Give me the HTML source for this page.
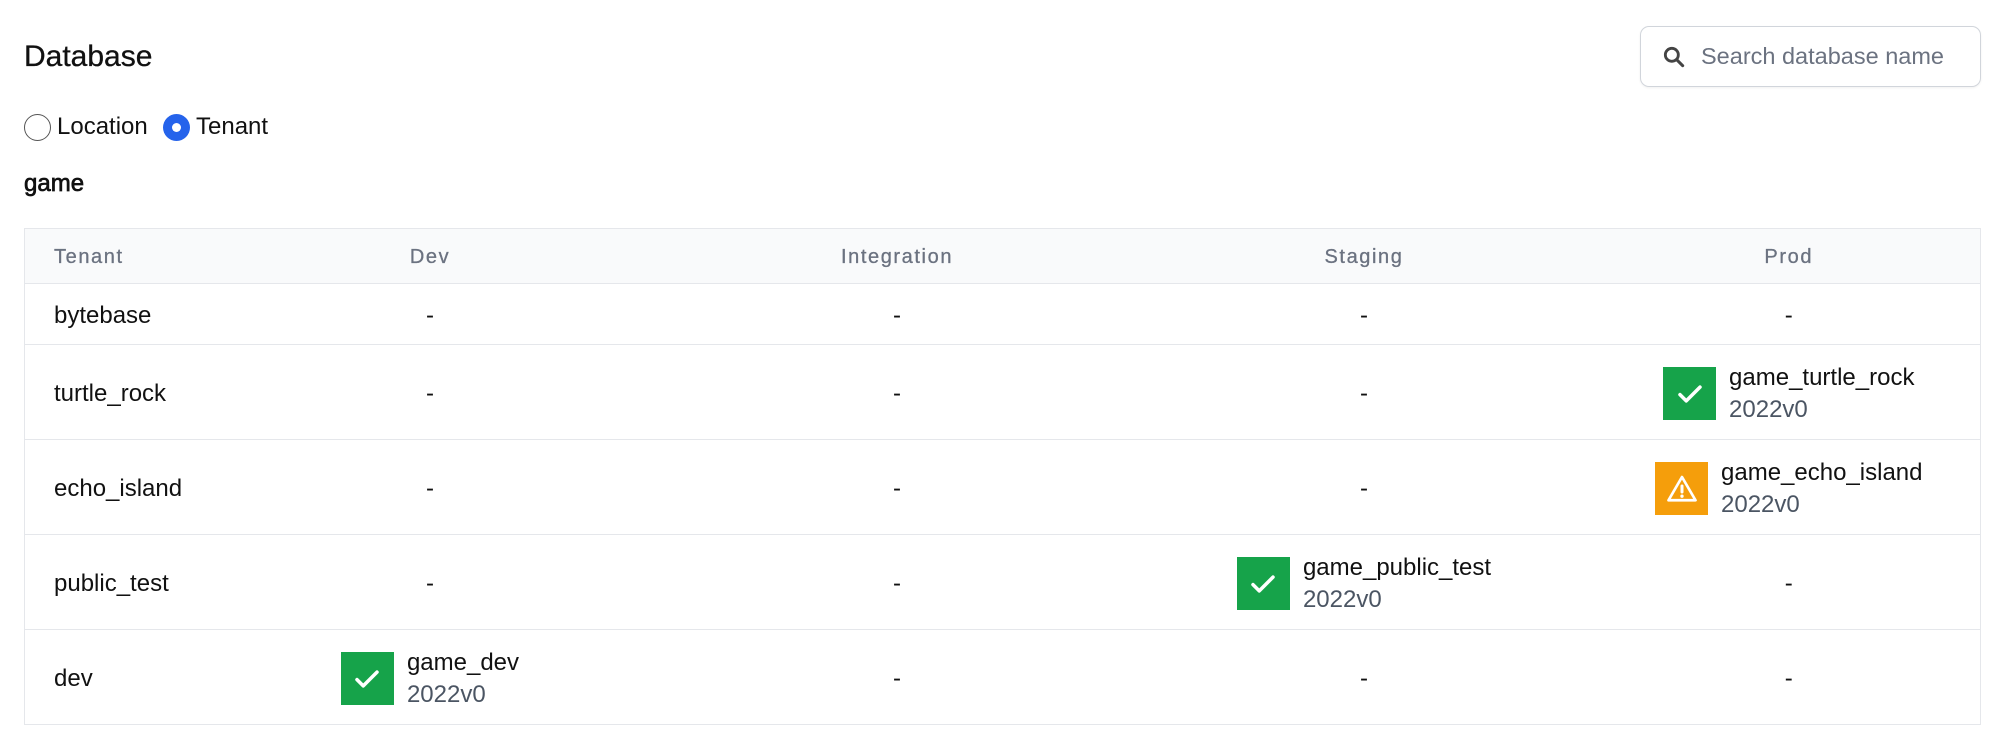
<!DOCTYPE html>
<html><head><meta charset="utf-8"><style>
*{box-sizing:border-box;margin:0;padding:0}
body{width:2000px;height:745px;background:#fff;font-family:"Liberation Sans",Arial,sans-serif;color:#111;position:relative;overflow:hidden}
.t{position:absolute;left:24px;top:40px;font-size:30px;color:#111;-webkit-text-stroke:0.3px #111}
.search{position:absolute;left:1640px;top:26px;width:341px;height:61px;border:1.5px solid #d1d5db;border-radius:9px;box-shadow:0 1px 2px rgba(0,0,0,.06)}
.search svg{position:absolute;left:20px;top:17px}
.search span{position:absolute;left:60px;top:16px;font-size:23.5px;color:#6b7280}
.radio{position:absolute;top:113px;height:28px;display:flex;align-items:center;font-size:24px}
.rc{width:27px;height:27px;border-radius:50%;border:1.5px solid #555;margin-right:6px}
.rc.on{border:none;background:#2563eb;position:relative}
.rc.on:after{content:"";position:absolute;left:9px;top:9px;width:9px;height:9px;border-radius:50%;background:#fff}
.g{position:absolute;left:24px;top:170px;font-size:24px;color:#111;-webkit-text-stroke:0.7px #111}
table{position:absolute;left:24px;top:228px;width:1957px;border-collapse:collapse;table-layout:fixed;font-size:24px}
td,th{border-top:1.5px solid #e5e7eb;border-bottom:1.5px solid #e5e7eb;text-align:center;padding:0}
td{padding-top:3px}
table{border-left:1.5px solid #e5e7eb;border-right:1.5px solid #e5e7eb}
th{background:#f9fafb;height:55px;font-size:20px;font-weight:normal;color:#6b7280;letter-spacing:1.6px;padding-top:3px;-webkit-text-stroke:0.3px #6b7280}
th:first-child,td:first-child{text-align:left;padding-left:29px}
tr.s td{height:61px}
tr.d td{height:95px}
.c{display:inline-flex;align-items:center;text-align:left}
.ic{width:53px;height:53px;margin-right:13px;display:flex;align-items:center;justify-content:center}
.ok{background:#16a34a}
.wr{background:#f59e0b}
.nm{line-height:32px}
.v{color:#4b5563}
</style></head><body>
<div class="t">Database</div>
<div class="search"><svg width="26" height="26" viewBox="0 0 24 24"><circle cx="10" cy="10" r="6" fill="none" stroke="#444" stroke-width="2.6"/><path d="M14.5 14.5L20 20" stroke="#444" stroke-width="2.8" stroke-linecap="round"/></svg><span>Search database name</span></div>
<div class="radio" style="left:24px"><div class="rc"></div>Location</div>
<div class="radio" style="left:163px"><div class="rc on"></div>Tenant</div>
<div class="g">game</div>
<table>
<colgroup><col style="width:172px"><col style="width:467px"><col style="width:467px"><col style="width:467px"><col></colgroup>
<tr><th>Tenant</th><th>Dev</th><th>Integration</th><th>Staging</th><th>Prod</th></tr>
<tr class="s"><td>bytebase</td><td>-</td><td>-</td><td>-</td><td>-</td></tr>
<tr class="d"><td>turtle_rock</td><td>-</td><td>-</td><td>-</td><td><div class="c"><div class="ic ok"><svg width="30" height="30" viewBox="0 0 24 24"><path d="M4 12.5l5 5L20 6.5" fill="none" stroke="#fff" stroke-width="2.8" stroke-linecap="round" stroke-linejoin="round"/></svg></div><div class="nm">game_turtle_rock<br><span class="v">2022v0</span></div></div></td></tr>
<tr class="d"><td>echo_island</td><td>-</td><td>-</td><td>-</td><td><div class="c"><div class="ic wr"><svg width="36" height="36" viewBox="0 0 24 24"><path d="M12 4L21 19.5H3Z" fill="none" stroke="#fff" stroke-width="1.8" stroke-linejoin="round"/><path d="M12 10v4" stroke="#fff" stroke-width="2" stroke-linecap="round"/><circle cx="12" cy="16.8" r="1.1" fill="#fff"/></svg></div><div class="nm">game_echo_island<br><span class="v">2022v0</span></div></div></td></tr>
<tr class="d"><td>public_test</td><td>-</td><td>-</td><td><div class="c"><div class="ic ok"><svg width="30" height="30" viewBox="0 0 24 24"><path d="M4 12.5l5 5L20 6.5" fill="none" stroke="#fff" stroke-width="2.8" stroke-linecap="round" stroke-linejoin="round"/></svg></div><div class="nm">game_public_test<br><span class="v">2022v0</span></div></div></td><td>-</td></tr>
<tr class="d"><td>dev</td><td><div class="c"><div class="ic ok"><svg width="30" height="30" viewBox="0 0 24 24"><path d="M4 12.5l5 5L20 6.5" fill="none" stroke="#fff" stroke-width="2.8" stroke-linecap="round" stroke-linejoin="round"/></svg></div><div class="nm">game_dev<br><span class="v">2022v0</span></div></div></td><td>-</td><td>-</td><td>-</td></tr>
</table>
</body></html>
